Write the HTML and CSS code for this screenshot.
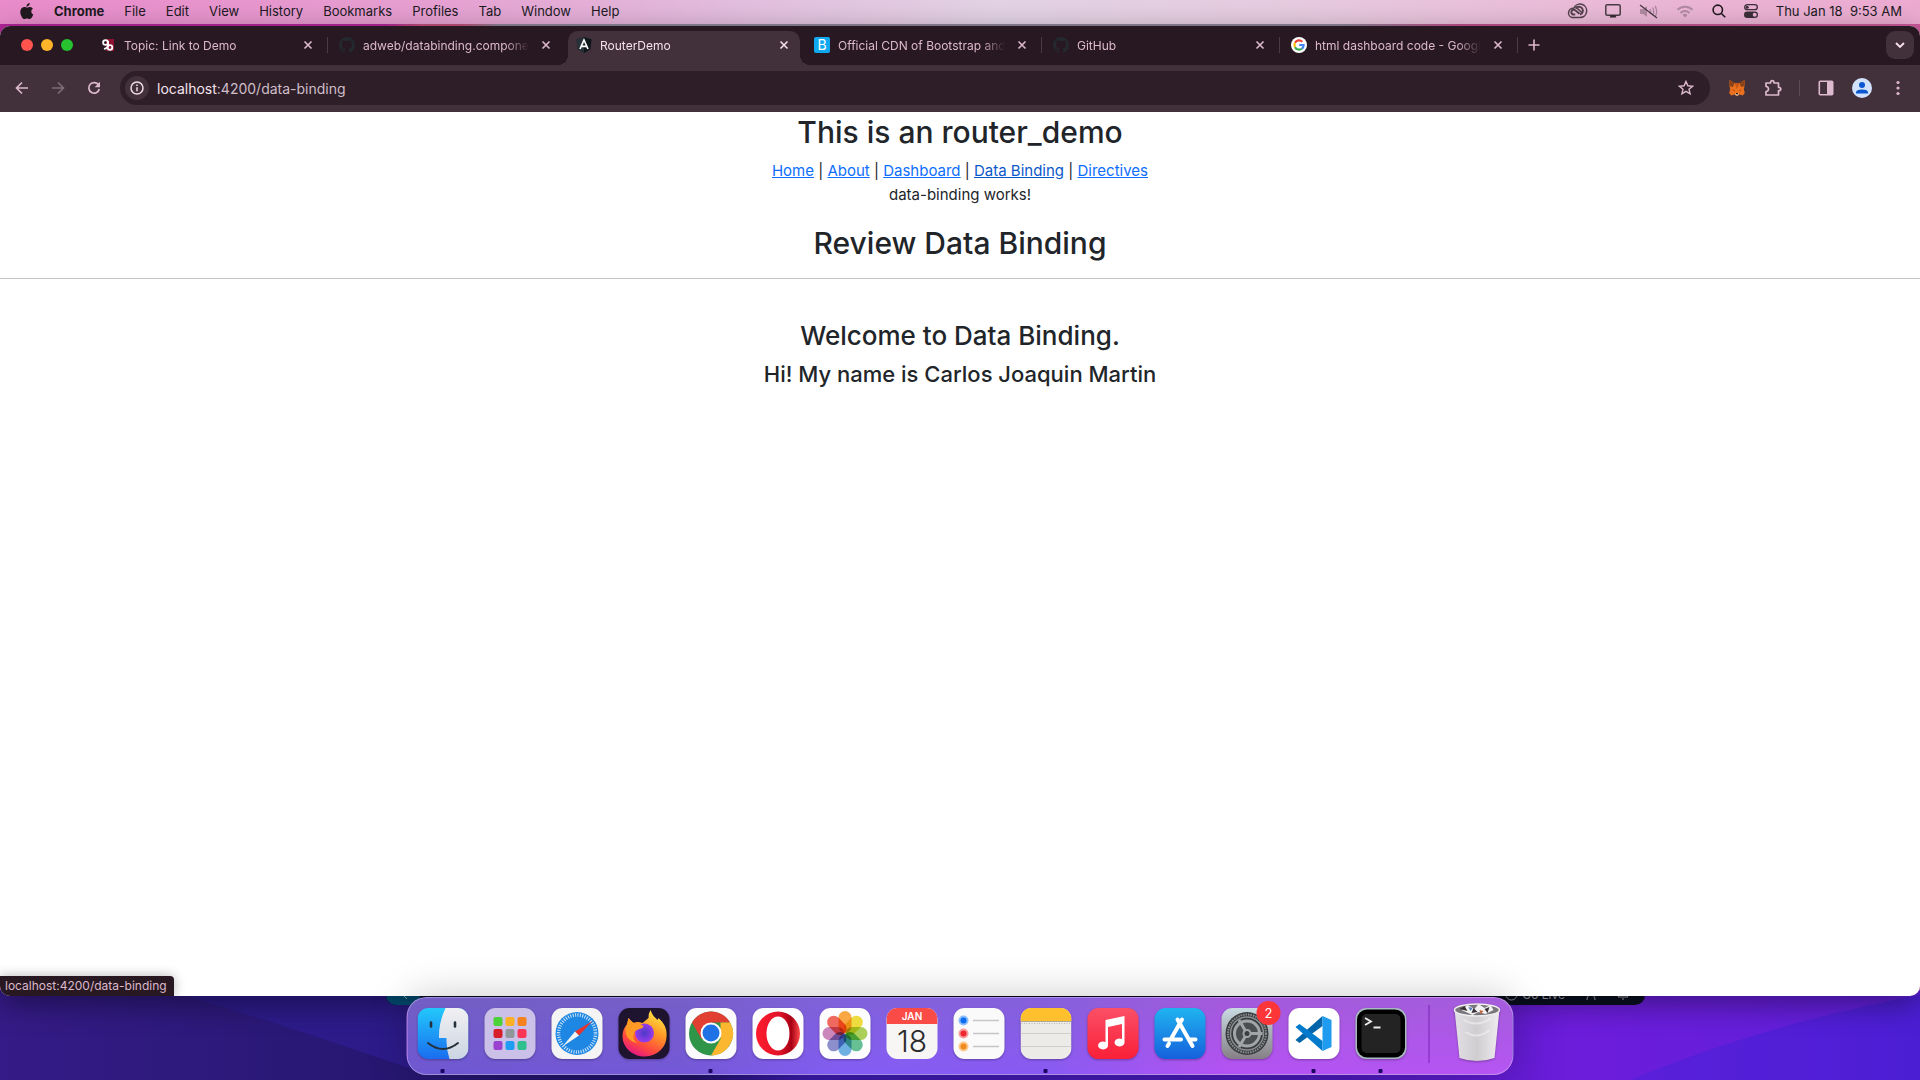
FILE: index.html
```html
<!DOCTYPE html>
<html lang="en">
<head>
<meta charset="utf-8">
<title>RouterDemo</title>
<link rel="stylesheet" href="styles.css">
</head>
<body>
<svg class="defs" width="0" height="0" aria-hidden="true">
  <defs>
    <symbol id="close" viewBox="0 0 10 10"><path d="M1.5 1.5l7 7M8.500 1.500l-7 7" fill="none" stroke="currentColor" stroke-width="1.600"/></symbol>
    <symbol id="github" viewBox="0 0 16 16"><path fill="#24292f" d="M8 0C3.580 0 0 3.580 0 8c0 3.540 2.290 6.530 5.470 7.590.4.070.55-.17.55-.38 0-.19-.01-.82-.01-1.490-2.010.37-2.530-.49-2.690-.94-.09-.23-.48-.94-.82-1.130-.28-.15-.68-.52-.01-.53.63-.01 1.080.58 1.230.82.72 1.210 1.870.87 2.330.66.07-.52.28-.87.51-1.070-1.780-.2-3.640-.89-3.640-3.950 0-.87.31-1.590.82-2.150-.08-.2-.36-1.020.08-2.120 0 0 .67-.21 2.200.82a7.700 7.700 0 0 1 4 0c1.530-1.040 2.200-.82 2.200-.82.44 1.100.16 1.920.08 2.120.51.56.82 1.270.82 2.150 0 3.070-1.870 3.750-3.650 3.950.29.25.54.73.54 1.480 0 1.070-.01 1.930-.01 2.200 0 .21.15.46.55.38A8 8 0 0 0 16 8c0-4.420-3.580-8-8-8z"/></symbol>
  </defs>
</svg>
<div class="desktop">
  <svg class="wallpaper" viewBox="0 0 1920 90" preserveAspectRatio="none" aria-hidden="true">
    <defs>
      <linearGradient id="wp" x2="1"><stop offset="0" stop-color="#341b87"/><stop offset=".18" stop-color="#281873"/><stop offset=".36" stop-color="#1f1066"/><stop offset=".42" stop-color="#3a1aa8"/><stop offset=".7" stop-color="#4a18b8"/><stop offset=".82" stop-color="#6c1ddb"/><stop offset="1" stop-color="#5f1fda"/></linearGradient>
      <linearGradient id="wr" x2="1"><stop offset="0" stop-color="#5a1fda"/><stop offset="1" stop-color="#4b1ed4"/></linearGradient>
    </defs>
    <path fill="url(#wp)" d="M0 0h1920v90H0z"/>
    <path fill="#2c1b89" d="M180 4Q300 40 420 82L820 82V0H180z"/>
    <path fill="url(#wr)" d="M1630 90Q1760 35 1920 5V90z"/>
  </svg>

  <header class="menubar">
    <nav class="menus" aria-label="Application menu">
      <button class="menu apple" aria-label="Apple"><svg width="14" height="17" viewBox="0 0 14 17"><path fill="#201a1e" d="M9.700 0c.1 1-.3 1.900-.9 2.600-.6.700-1.500 1.200-2.300 1.100-.1-.9.300-1.900.9-2.500C8 .5 9 .1 9.700 0zM12.900 5.800c-1 .6-1.600 1.500-1.600 2.700 0 1.400.8 2.500 2 3-.3.900-.7 1.700-1.200 2.500-.7 1-1.400 2-2.500 2-1 0-1.400-.6-2.600-.6-1.200 0-1.600.6-2.600.6-1.100 0-1.900-1.100-2.600-2.100C.4 11.800-.4 8.300 1 6c.8-1.300 2-2.100 3.300-2.100 1.200 0 2 .7 2.900.7.900 0 1.700-.7 3-.7 1 .1 2 .5 2.700 1.900z"/></svg></button>
      <button class="menu app">Chrome</button>
      <button class="menu">File</button>
      <button class="menu">Edit</button>
      <button class="menu">View</button>
      <button class="menu">History</button>
      <button class="menu">Bookmarks</button>
      <button class="menu">Profiles</button>
      <button class="menu">Tab</button>
      <button class="menu">Window</button>
      <button class="menu">Help</button>
    </nav>
    <div class="status">
      <svg width="20" height="16" viewBox="0 0 20 16" fill="none" stroke="#54424d"><path stroke-width="1.500" d="M5 14.500h8a6.700 6.700 0 1 0-6.200-9.200A4.700 4.700 0 0 0 5 14.500z"/><path stroke-width="2" d="M12.500 10.800L8.200 7.200a2.400 2.400 0 1 0-1.700 4.300h1.700M8.500 5.500a4 4 0 1 1 4.500 6"/><path stroke-width="1.500" d="M9.500 4.600l5 4.600"/></svg>
      <svg width="16" height="14" viewBox="0 0 16 14"><rect x=".8" y=".8" width="14.400" height="10.400" rx="1.500" fill="none" stroke="#4a3c45" stroke-width="1.500"/><path fill="#33282f" d="M6 11h4l1.500 2.500h-7z"/></svg>
      <svg width="19" height="15" viewBox="0 0 19 15"><path fill="#b08aa2" d="M1 5h3l4-3v11l-4-3H1z"/><path fill="none" stroke="#b08aa2" stroke-width="1.400" d="M11 5q1.500 2.500 0 5M13.500 3.500q2.500 4 0 8M16 2q3.500 5.500 0 11"/><path stroke="#4a3a45" stroke-width="1.300" d="M1 1l17 13"/></svg>
      <svg width="18" height="13" viewBox="0 0 18 13" fill="none" stroke="#b08aa2" stroke-width="2"><path d="M1.500 4.800a10.500 10.500 0 0 1 15 0M4.500 8a6.300 6.300 0 0 1 9 0"/><path fill="#b08aa2" stroke="none" d="M6.600 10a3.400 3.400 0 0 1 4.800 0L9 12.600z"/></svg>
      <svg width="14" height="14" viewBox="0 0 14 14" fill="none" stroke="#201a1e" stroke-width="1.600"><circle cx="5.800" cy="5.800" r="4.700"/><path d="M9.200 9.200l4 4"/></svg>
      <svg width="14" height="14" viewBox="0 0 14 14"><rect x=".7" y=".7" width="12.600" height="4.900" rx="2.450" fill="none" stroke="#3d2f39" stroke-width="1.300"/><circle cx="3.200" cy="3.200" r="1.500" fill="#3d2f39"/><rect y="7.500" width="14" height="6.500" rx="3.200" fill="#3d2f39"/><circle cx="10.700" cy="10.700" r="2" fill="#eab3d2"/></svg>
      <time class="clock">Thu Jan 18&nbsp; 9:53 AM</time>
    </div>
  </header>

  <div class="editor" aria-hidden="true">
    <span class="remote"><svg width="12" height="12" viewBox="0 0 12 12" fill="none" stroke="#9fc4d6"><path d="M2 2l3 3-3 3M10 3L6 7l4 4"/></svg></span>
    <span class="golive"><svg width="13" height="13" viewBox="0 0 13 13" fill="none" stroke="#a9a9b2"><circle cx="6.500" cy="6.500" r="5.500"/><path d="M5 6l1.500 2L8 6"/></svg>Go Live</span>
    <svg width="12" height="12" viewBox="0 0 12 12" fill="none" stroke="#a9a9b2"><circle cx="6" cy="4" r="2.500"/><path d="M2 12q0-5 4-5t4 5"/></svg>
    <svg width="12" height="12" viewBox="0 0 12 12" fill="none" stroke="#a9a9b2"><path d="M1 9h10L9.500 7V4a3.500 3.500 0 0 0-7 0v3zM5 11h2"/></svg>
  </div>

  <section class="browser">
    <div class="tabstrip">
      <div class="lights">
        <button class="light red" aria-label="Close window"></button>
        <button class="light yellow" aria-label="Minimize"></button>
        <button class="light green" aria-label="Zoom"></button>
      </div>
      <div class="tab">
        <svg width="16" height="16" viewBox="0 0 16 16"><rect x="6" y="2" width="8" height="12" fill="#8c1230"/><g fill="none" stroke="#fff" stroke-width="1.800"><circle cx="5.500" cy="5.500" r="2.400"/><path d="M8 4v4q0 3-4 4"/><circle cx="10" cy="10.500" r="2.300"/></g></svg>
        <span class="title">Topic: Link to Demo</span>
        <button class="close" aria-label="Close tab"><svg width="10" height="10"><use href="#close"/></svg></button>
      </div>
      <div class="tab line">
        <svg width="16" height="16"><use href="#github"/></svg>
        <span class="title">adweb/databinding.componen</span>
        <button class="close" aria-label="Close tab"><svg width="10" height="10"><use href="#close"/></svg></button>
      </div>
      <div class="tab active">
        <svg width="16" height="16" viewBox="0 0 16 16"><path fill="#1b2a30" d="M8 0l7.500 2.600-1.200 9.600L8 16z"/><path fill="#0f171b" d="M8 0L.5 2.600l1.200 9.600L8 16l6.300-3.800L15.500 2.600z"/><path fill="#263238" d="M8 0v16l-6.300-3.800L.5 2.600z"/><path fill="none" stroke="#fff" stroke-width="1.700" d="M4 12L8 3l4 9M5.500 9.300h5"/></svg>
        <span class="title">RouterDemo</span>
        <button class="close" aria-label="Close tab"><svg width="10" height="10"><use href="#close"/></svg></button>
      </div>
      <div class="tab">
        <span class="bootstrap">B</span>
        <span class="title">Official CDN of Bootstrap and</span>
        <button class="close" aria-label="Close tab"><svg width="10" height="10"><use href="#close"/></svg></button>
      </div>
      <div class="tab line">
        <svg width="16" height="16"><use href="#github"/></svg>
        <span class="title">GitHub</span>
        <button class="close" aria-label="Close tab"><svg width="10" height="10"><use href="#close"/></svg></button>
      </div>
      <div class="tab line">
        <svg width="16" height="16" viewBox="0 0 16 16"><circle cx="8" cy="8" r="8" fill="#fff"/><g fill="none" stroke-width="2.200"><path stroke="#ea4335" d="M4 5.800A4.600 4.600 0 0 1 11.300 4.700"/><path stroke="#fbbc05" d="M4 10.200a4.600 4.600 0 0 1 0-4.400"/><path stroke="#34a853" d="M11 11.500A4.600 4.600 0 0 1 4 10.200"/><path stroke="#4285f4" d="M8.200 8h4.400q0 2.300-1.600 3.500"/></g></svg>
        <span class="title">html dashboard code - Googl</span>
        <button class="close" aria-label="Close tab"><svg width="10" height="10"><use href="#close"/></svg></button>
      </div>
      <button class="newtab" aria-label="New tab"><svg width="12" height="12" viewBox="0 0 12 12"><path d="M6 .5v11M.5 6h11" stroke="currentColor" stroke-width="1.600"/></svg></button>
      <button class="tabsearch" aria-label="Search tabs"><svg width="10" height="7" viewBox="0 0 10 7"><path d="M1 1l4 4 4-4" fill="none" stroke="currentColor" stroke-width="1.900"/></svg></button>
    </div>

    <div class="toolbar">
      <button class="tool" aria-label="Back"><svg width="14" height="14" viewBox="0 0 14 14"><path d="M13 7H2M7 1.500L1.500 7 7 12.500" fill="none" stroke="currentColor" stroke-width="1.700"/></svg></button>
      <button class="tool off" aria-label="Forward"><svg width="14" height="14" viewBox="0 0 14 14"><path d="M1 7h11M7 1.500L12.500 7 7 12.500" fill="none" stroke="currentColor" stroke-width="1.700"/></svg></button>
      <button class="tool" aria-label="Reload"><svg width="14" height="14" viewBox="0 0 14 14"><path d="M11.600 4A5.300 5.300 0 1 0 12.300 8" fill="none" stroke="currentColor" stroke-width="1.700"/><path fill="currentColor" d="M13 .8v5.400H7.600z"/></svg></button>
      <div class="omnibox">
        <button class="info" aria-label="Site information"><svg width="14" height="14" viewBox="0 0 14 14"><circle cx="7" cy="7" r="6" fill="none" stroke="currentColor" stroke-width="1.500"/><path d="M7 6.200v4M7 3.500V5" stroke="currentColor" stroke-width="1.500"/></svg></button>
        <div class="url" role="textbox" aria-label="Address"><b>localhost</b>:4200/data-binding</div>
        <button class="star" aria-label="Bookmark"><svg width="16" height="16" viewBox="0 0 16 16"><path d="M8 1.500l1.900 4.300 4.700.4-3.600 3.100 1.100 4.600L8 11.400l-4.100 2.500L5 9.300 1.400 6.200l4.700-.4z" fill="none" stroke="currentColor" stroke-width="1.400"/></svg></button>
      </div>
      <div class="actions">
        <button class="tool" aria-label="MetaMask"><svg width="16" height="16" viewBox="0 0 16 16"><path fill="#e8701f" d="M.5 0l5 3h5l5-3 .3 5-1 4 1 4-2 2.500-3.500-1L9 15.800H7L5.700 14.500l-3.500 1-2-2.500 1-4-1-4z"/><path fill="#8a4318" d="M.5 0l5 3L4 7 .2 6zM15.500 0l-5 3L12 7l3.800-1z"/><path fill="#c95614" d="M5.500 3L8 9l2.500-6zM3 9l3 1-1 2zM13 9l-3 1 1 2z"/><path fill="#d9c3b3" d="M6 13.500h4l-1 2H7z"/><path fill="#222" d="M7 13h2v1.300H7z"/></svg></button>
        <button class="tool" aria-label="Extensions"><svg width="18" height="18" viewBox="0 0 18 18"><path d="M2 4h4.500q0-2.300 1.800-2.300T10 4h4.500v4.300q2.300 0 2.300 1.700t-2.300 1.700V16H2v-3.500q2.500-.3 2.500-2.500T2 7.500z" fill="none" stroke="currentColor" stroke-width="1.700" stroke-linejoin="round"/></svg></button>
        <span class="rule"></span>
        <button class="tool" aria-label="Side panel"><svg width="16" height="16" viewBox="0 0 16 16"><rect x="1.300" y="1.300" width="13.400" height="13.400" rx="1" fill="none" stroke="currentColor" stroke-width="1.600"/><path fill="currentColor" d="M9 1h6v14H9z"/></svg></button>
        <button class="tool" aria-label="Profile"><svg width="20" height="20" viewBox="0 0 20 20"><circle cx="10" cy="10" r="10" fill="#d3e3fd"/><circle cx="10" cy="7" r="3" fill="#0b57d0"/><path fill="#0b57d0" d="M4 15.500v-1q0-3 6-3t6 3v1z"/></svg></button>
        <button class="tool" aria-label="Menu"><svg width="4" height="16" viewBox="0 0 4 16" fill="currentColor"><circle cx="2" cy="2.500" r="1.600"/><circle cx="2" cy="8" r="1.600"/><circle cx="2" cy="13.500" r="1.600"/></svg></button>
      </div>
    </div>

    <main class="page">
      <h2>This is an router_demo</h2>
      <nav><a href="#home">Home</a> | <a href="#about">About</a> | <a href="#dashboard">Dashboard</a> | <a class="hover" href="#data-binding">Data Binding</a> | <a href="#directives">Directives</a></nav>
      <p>data-binding works!</p>
      <h2>Review Data Binding</h2>
      <hr>
      <br>
      <h3>Welcome to Data Binding.</h3>
      <h4>Hi! My name is Carlos Joaquin Martin</h4>
    </main>
    <div class="hint">localhost:4200/data-binding</div>
  </section>

  <nav class="dock" aria-label="Dock">
    <button class="icon running" aria-label="Finder"><svg viewBox="0 0 51 51"><defs><linearGradient id="f1" y2="1" x2="0"><stop stop-color="#22c8fb"/><stop offset="1" stop-color="#1a6df0"/></linearGradient><linearGradient id="f2" y2="1" x2="0"><stop stop-color="#f1f0f3"/><stop offset="1" stop-color="#cbd5e2"/></linearGradient><clipPath id="sq"><rect width="51" height="51" rx="11"/></clipPath></defs><g clip-path="url(#sq)"><path fill="url(#f1)" d="M0 0h51v51H0z"/><path fill="url(#f2)" d="M28 0Q21 15 21.500 30H29q-.5 10 3 21h19V0z"/></g><path d="M13.500 14.500v4M37.500 14.500v4" stroke="#24303a" stroke-width="2.600" stroke-linecap="round"/><path d="M10.500 35q15 12 30 0" fill="none" stroke="#24303a" stroke-width="2" stroke-linecap="round"/></svg></button>
    <button class="icon" aria-label="Launchpad"><svg viewBox="0 0 51 51"><rect width="51" height="51" rx="11" fill="#cbc1e8"/><rect x="9" y="9" width="9" height="9" rx="2" fill="#4cd137"/><rect x="21" y="9" width="9" height="9" rx="2" fill="#fbb026"/><rect x="33" y="9" width="9" height="9" rx="2" fill="#f5821f"/><rect x="9" y="21" width="9" height="9" rx="2" fill="#d71f2b"/><rect x="21" y="21" width="9" height="9" rx="2" fill="#8f979b"/><rect x="33" y="21" width="9" height="9" rx="2" fill="#fc3554"/><rect x="9" y="33" width="9" height="9" rx="2" fill="#9a41cf"/><rect x="21" y="33" width="9" height="9" rx="2" fill="#1f9df5"/><rect x="33" y="33" width="9" height="9" rx="2" fill="#2fc08e"/></svg></button>
    <button class="icon" aria-label="Safari"><svg viewBox="0 0 51 51"><rect width="51" height="51" rx="11" fill="#f4f4f5"/><circle cx="25.500" cy="25.500" r="21.500" fill="#1e86e3"/><circle cx="25.500" cy="25.500" r="18.500" fill="none" stroke="#cfe6fa" stroke-width="3.500" stroke-dasharray="1 1.420"/><path fill="#e8342c" d="M41 13L23.500 23.500l4 4z"/><path fill="#f3f3f3" d="M11 38.500l12.500-15 4 4z"/></svg></button>
    <button class="icon" aria-label="Firefox"><svg viewBox="0 0 51 51"><defs><linearGradient id="ff" x1=".8" x2=".3" y2="1"><stop stop-color="#fff04a"/><stop offset=".4" stop-color="#ff9a25"/><stop offset=".75" stop-color="#ff4a3d"/><stop offset="1" stop-color="#e31587"/></linearGradient><radialGradient id="fp"><stop stop-color="#4a3ac8"/><stop offset="1" stop-color="#9b3bea"/></radialGradient></defs><rect width="51" height="51" rx="11" fill="#1f1430"/><path fill="url(#ff)" d="M32 2q2 6 7 10l1-2q9 8 8 18a22 20 0 0 1-44 1q0-9 5-13l1-6q2 3 5 5 4-2 9 0l6-5q0-5 2-8z"/><circle cx="26" cy="25" r="9.500" fill="url(#fp)"/><path fill="#ff9a25" d="M10 10q4 5 8 6 3-1 7 2l-1 2q-7 2-8 4-3 8 3 11-12-2-12-14z"/></svg></button>
    <button class="icon running" aria-label="Chrome"><svg viewBox="0 0 51 51"><rect width="51" height="51" rx="11" fill="#fbfafc"/><circle cx="25.500" cy="25.500" r="22" fill="#2f9549"/><path fill="#e23f33" d="M6.500 14.500A22 22 0 0 1 44.600 14.500H25.500L16 31z"/><path fill="#fbb72f" d="M44.600 14.500A22 22 0 0 1 25.500 47.500L35 31V14.500z"/><circle cx="25.500" cy="25" r="10.500" fill="#fff"/><circle cx="25.500" cy="25" r="8.500" fill="#1f71e6"/></svg></button>
    <button class="icon" aria-label="Opera"><svg viewBox="0 0 51 51"><defs><linearGradient id="op" x2="1" y2="0"><stop stop-color="#ff1b2d"/><stop offset=".55" stop-color="#e0142a"/><stop offset=".8" stop-color="#a70014"/><stop offset="1" stop-color="#ff4b4b"/></linearGradient></defs><rect width="51" height="51" rx="11" fill="#fdfcfe"/><ellipse cx="25.500" cy="25.500" rx="22" ry="22" fill="url(#op)"/><ellipse cx="25.500" cy="25.500" rx="11.500" ry="17" fill="#fff"/></svg></button>
    <button class="icon" aria-label="Photos"><svg viewBox="0 0 51 51"><rect width="51" height="51" rx="11" fill="#fdfcfe"/><g class="petals"><rect x="19" y="3" width="13" height="22" rx="6.500" fill="#fb9a20"/><rect x="19" y="3" width="13" height="22" rx="6.500" fill="#ecd81d" transform="rotate(45 25.500 25.500)"/><rect x="19" y="3" width="13" height="22" rx="6.500" fill="#9fcb3b" transform="rotate(90 25.500 25.500)"/><rect x="19" y="3" width="13" height="22" rx="6.500" fill="#4db782" transform="rotate(135 25.500 25.500)"/><rect x="19" y="3" width="13" height="22" rx="6.500" fill="#57a5e0" transform="rotate(180 25.500 25.500)"/><rect x="19" y="3" width="13" height="22" rx="6.500" fill="#7a7cc4" transform="rotate(225 25.500 25.500)"/><rect x="19" y="3" width="13" height="22" rx="6.500" fill="#c473b0" transform="rotate(270 25.500 25.500)"/><rect x="19" y="3" width="13" height="22" rx="6.500" fill="#ef5043" transform="rotate(315 25.500 25.500)"/></g></svg></button>
    <button class="icon calendar" aria-label="Calendar"><span class="month">JAN</span><span class="day">18</span></button>
    <button class="icon" aria-label="Reminders"><svg viewBox="0 0 51 51"><rect width="51" height="51" rx="11" fill="#fafafa"/><path d="M19.500 12.500h26M19.500 25.500h26M19.500 38.500h26" stroke="#c6c6c8" stroke-width="1.400"/><circle cx="10" cy="12.500" r="5" fill="#8bbcfb"/><circle cx="10" cy="25.500" r="5" fill="#f99b9b"/><circle cx="10" cy="38.500" r="5" fill="#fbc88b"/><circle cx="10" cy="12.500" r="3" fill="#0a6cf0"/><circle cx="10" cy="25.500" r="3" fill="#f0262e"/><circle cx="10" cy="38.500" r="3" fill="#f18a1d"/></svg></button>
    <button class="icon running" aria-label="Notes"><svg viewBox="0 0 51 51"><g clip-path="url(#sq)"><path fill="#edebe8" d="M0 0h51v51H0z"/><path fill="#fec02d" d="M0 0h51v13H0z"/><path d="M0 13.500h51" stroke="#b0a893"/><path d="M1 15.500h50" stroke="#bbb" stroke-dasharray="1 1.500"/><path d="M0 25.500h51M0 38.500h51" stroke="#d0cdca"/></g></svg></button>
    <button class="icon" aria-label="Music"><svg viewBox="0 0 51 51"><defs><linearGradient id="mu" x2="0" y2="1"><stop stop-color="#fb5066"/><stop offset="1" stop-color="#fa1f38"/></linearGradient></defs><rect width="51" height="51" rx="11" fill="url(#mu)"/><path fill="#fff" d="M18 12l19-4v27a5 4 0 1 1-2.500-4V16L20.500 19v19a5 4 0 1 1-2.500-4z"/></svg></button>
    <button class="icon" aria-label="App Store"><svg viewBox="0 0 51 51"><defs><linearGradient id="as" x2="0" y2="1"><stop stop-color="#1fb4f0"/><stop offset="1" stop-color="#1660dc"/></linearGradient></defs><rect width="51" height="51" rx="11" fill="url(#as)"/><g stroke="#fff" stroke-width="4" stroke-linecap="round"><path d="M27.500 11.500L17 30M14.500 35.500l-1.500 2.500M23 11.500l15 26.500M10 31.500h16.500M36 31.500h5"/></g></svg></button>
    <button class="icon" aria-label="System Preferences, 2 notifications"><svg viewBox="0 0 51 51"><defs><linearGradient id="sp" x2="0" y2="1"><stop stop-color="#c9dbe2"/><stop offset="1" stop-color="#858085"/></linearGradient></defs><rect width="51" height="51" rx="11" fill="url(#sp)"/><circle cx="25.500" cy="25.500" r="21.500" fill="#3a3d3f"/><circle cx="25.500" cy="25.500" r="19" fill="none" stroke="#8b8e90" stroke-width="2" stroke-dasharray="1.500 1"/><circle cx="25.500" cy="25.500" r="16.500" fill="none" stroke="#8b8e90" stroke-width="1.500"/><circle cx="25.500" cy="25.500" r="12.500" fill="#4b4e50" stroke="#a2a5a7" stroke-width="3"/><path d="M25.500 25.500H41M25.500 25.500L17.500 12M25.500 25.500L17.500 39" stroke="#a2a5a7" stroke-width="3"/><circle cx="25.500" cy="25.500" r="3.500" fill="#3a3d3f" stroke="#a2a5a7" stroke-width="2"/></svg><span class="badge">2</span></button>
    <button class="icon running" aria-label="Visual Studio Code"><svg viewBox="0 0 51 51"><rect width="51" height="51" rx="11" fill="#fff"/><path fill="#0065a9" d="M34 8L7 32l4 3 23-17z"/><path fill="#007acc" d="M34 43L7 19l4-3 23 17z"/><path fill="#1f9cf0" d="M34 8l9 4v27l-9 4z"/></svg></button>
    <button class="icon running" aria-label="Terminal"><svg viewBox="0 0 51 51"><rect width="51" height="51" rx="11" fill="#a9bcc0"/><rect x="1.500" y="1.500" width="48" height="48" rx="10" fill="#000"/><rect x="6" y="6" width="39" height="39" rx="5" fill="#232323"/><path d="M9.500 10l6 3.500-6 3.500M18 19.500h7" fill="none" stroke="#eee" stroke-width="1.800"/></svg></button>
    <span class="divider"></span>
    <button class="icon" aria-label="Trash"><svg viewBox="0 0 51 51"><defs><linearGradient id="tr" x2="1" y2="0"><stop stop-color="#e2e0e4"/><stop offset=".5" stop-color="#cfcdd0"/><stop offset="1" stop-color="#efedf0"/></linearGradient></defs><path fill="url(#tr)" d="M3 1h45l-5 49q-17.500 6-35 0z"/><ellipse cx="25.500" cy="2" rx="22.500" ry="6" fill="#7a777c" stroke="#eee" stroke-width="1.500"/><path fill="#f2f2f2" d="M10 2l6-5 7 4 4-5 6 4 6-3 3 5-8 4-7-2-6 3z"/><path fill="#3a3236" d="M8 1l5-3 3 5zM22 0l4 4-6 1zM33 1l5-2-2 6z"/><path fill="#4a78b8" d="M17-1l4 1-2 3z"/><path fill="#c9653a" d="M28 2l4 1-3 3z"/><path d="M12 12q14 8 28-2M14 24q12 8 24-2" stroke="#f3f1f4" stroke-opacity=".6" stroke-width="2" fill="none"/></svg></button>
  </nav>
</div>
</body>
</html>
```
FILE: styles.css
```css
* { box-sizing: border-box; }

body {
  margin: 0;
  font-family: Inter, "Liberation Sans", sans-serif;
  color: #212529;
}

button {
  border: 0;
  padding: 0;
  background: none;
  font: inherit;
  color: inherit;
  display: flex;
  align-items: center;
  justify-content: center;
}

svg { display: block; flex: none; overflow: visible; }
.defs { position: absolute; }

.desktop {
  position: relative;
  min-height: 100vh;
  display: flex;
  flex-direction: column;
  overflow: hidden;
  isolation: isolate;
  background: linear-gradient(90deg, #b3259a 0 20%, #c0507a 22% 24%, #8d8399 26% 70%, #c04f8c 76%, #cc5a9a);
}

.wallpaper {
  position: absolute;
  bottom: 0;
  width: 100%;
  height: 90px;
  z-index: -2;
}

/* menu bar */
.menubar {
  height: 24px;
  padding: 0 18px 2px 20px;
  display: flex;
  align-items: center;
  justify-content: space-between;
  background: linear-gradient(90deg, #e98bca, #e69fd1 22%, #e2bddd 38%, #e2d2e4 52%, #e6cce0 66%, #eabbd8 82%, #ecaad0);
  color: #201a1e;
  font-size: 13px;
}
.menus, .status { display: flex; align-items: center; }
.menus { gap: 20px; }
.app { font-weight: 700; }
.status { gap: 18px; }

/* editor window behind the browser */
.editor {
  position: absolute;
  left: 386px;
  right: 275px;
  bottom: 75px;
  height: 22px;
  z-index: -1;
  display: flex;
  align-items: center;
  justify-content: flex-end;
  gap: 20px;
  padding-right: 16px;
  border-radius: 0 0 10px 10px;
  background: #0a1020;
  color: #a9a9b2;
  font-size: 12px;
  overflow: hidden;
}
.remote { margin-right: auto; width: 34px; height: 22px; padding: 5px 11px; background: #00567f; }
.golive { display: flex; align-items: center; gap: 4px; }

/* browser window */
.browser {
  position: relative;
  flex: 1;
  margin: 2px 0 84px;
  display: flex;
  flex-direction: column;
  border-radius: 10px;
  overflow: hidden;
  background: #fff;
  box-shadow: 0 8px 30px rgba(0, 0, 0, .4);
}
.tabstrip {
  height: 39px;
  display: flex;
  padding-right: 6px;
  background: #281821;
  color: #dcb9cc;
  font-size: 12px;
}
.lights { width: 89px; padding: 0 0 1px 21px; display: flex; align-items: center; gap: 8px; }
.light { width: 12px; height: 12px; border-radius: 6px; }
.red { background: #ff544d; }
.yellow { background: #ffb429; }
.green { background: #28c231; }

.tab {
  position: relative;
  flex: 0 1 238px;
  min-width: 0;
  display: flex;
  align-items: center;
  gap: 8px;
  padding: 0 14px 1px 11px;
}
.tab.line { border-left: 1px solid transparent; border-image: linear-gradient(transparent 11px, #4c3a44 11px 27px, transparent 27px) 1; }
.title {
  flex: 1;
  min-width: 0;
  overflow: hidden;
  white-space: nowrap;
  mask-image: linear-gradient(90deg, #000 calc(100% - 24px), transparent);
}
.close { width: 14px; height: 16px; justify-content: flex-end; }
.active {
  height: 34px;
  margin: 5px 3px 0;
  flex-basis: 232px;
  padding: 0 11px 6px 8px;
  border-radius: 10px 10px 0 0;
  background: #42303a;
  color: #f5dfea;
}
.active::before, .active::after {
  content: "";
  position: absolute;
  bottom: 0;
  width: 10px;
  height: 10px;
}
.active::before { left: -10px; background: radial-gradient(circle at 0 0, transparent 10px, #42303a 10px); }
.active::after { right: -10px; background: radial-gradient(circle at 100% 0, transparent 10px, #42303a 10px); }
.bootstrap {
  width: 16px;
  height: 16px;
  border-radius: 2px;
  background: #10a9f0;
  color: #fff;
  font-size: 14px;
  line-height: 16px;
  text-align: center;
}
.newtab { padding: 0 10px 1px; border-left: 1px solid transparent; border-image: linear-gradient(transparent 11px, #4c3a44 11px 27px, transparent 27px) 1; }
.tabsearch {
  width: 28px;
  height: 28px;
  margin: 5px 0 0 auto;
  border-radius: 9px;
  background: #42303a;
  color: #f5dfea;
}

.toolbar {
  height: 47px;
  display: flex;
  align-items: center;
  padding: 0 4px 1px;
  background: #42303a;
  color: #dcb9cc;
}
.tool { width: 36px; height: 34px; }
.off { color: #7f6b76; }
.omnibox {
  flex: 1;
  height: 34px;
  margin: 0 9px 0 8px;
  display: flex;
  align-items: center;
  gap: 8px;
  padding: 0 16px 0 5px;
  border-radius: 17px;
  background: #2e1e28;
}
.info { width: 24px; height: 24px; border-radius: 12px; background: #42303a; color: #f0dde7; }
.url { flex: 1; font-size: 14px; color: #d0bec8; }
.url b { font-weight: 400; color: #f5e4ed; }
.actions { display: flex; align-items: center; }
.rule { width: 1px; height: 16px; margin: 0 8px; background: #5e4b55; }

/* web page */
.page { flex: 1; text-align: center; font-size: 15px; line-height: 24px; }
.page h2, .page h3, .page h4 { margin: 0 0 7px; font-weight: 500; }
.page h2 { font-size: 30px; line-height: 40px; }
.page h3 { font-size: 26px; line-height: 34px; }
.page h4 { font-size: 22px; line-height: 29px; }
.page p { margin: 0 0 16px; }
.page a { color: #0d6efd; }
.page a.hover { color: #0a58ca; }
.page hr { margin: 15px 0 16px; border: 0; border-top: 1px solid #c4c5c6; }
.hint {
  position: absolute;
  left: 0;
  bottom: 0;
  height: 20px;
  padding: 0 7px 0 5px;
  border-radius: 0 4px 0 8px;
  background: #281821;
  color: #dcb9cc;
  font-size: 12px;
  line-height: 20px;
  box-shadow: 0 0 12px rgba(0, 0, 0, .3);
}

/* dock */
.dock {
  position: absolute;
  left: 50%;
  bottom: 5px;
  transform: translateX(-50%);
  height: 78px;
  padding: 0 10px 5px;
  display: flex;
  align-items: center;
  gap: 16px;
  border: 1px solid rgba(255, 255, 255, .3);
  border-radius: 20px;
  background: linear-gradient(rgba(120, 110, 160, .3), transparent), linear-gradient(90deg, #6f57d2, #7458d8 25%, #845cf4 40%, #8a5af4 58%, #b452f4 74%, #b655f4);
  box-shadow: 0 0 40px rgba(0, 0, 0, .22);
}
.icon { position: relative; width: 51px; height: 51px; border-radius: 11px; }
.icon svg { width: 51px; height: 51px; filter: drop-shadow(0 1px 1px rgba(0, 0, 0, .3)); }
.running::after {
  content: "";
  position: absolute;
  left: 23px;
  bottom: -14px;
  width: 4px;
  height: 4px;
  border-radius: 1px;
  background: #1a0560;
}
.petals rect { mix-blend-mode: multiply; opacity: .85; }
.calendar { flex-direction: column; justify-content: flex-start; overflow: hidden; background: #f7f6f5; color: #2b2b2b; }
.month { width: 100%; height: 16px; background: #fa4b46; color: #fff; font-size: 10px; line-height: 17px; font-weight: 600; }
.day { font-size: 30px; line-height: 34px; font-weight: 300; }
.badge {
  position: absolute;
  right: -8px;
  top: -7px;
  width: 24px;
  height: 24px;
  border-radius: 12px;
  background: #fc3539;
  color: #fff;
  font-size: 13px;
  line-height: 24px;
}
.divider { width: 1px; height: 58px; margin: 0 6px; background: #7a22b8; }
```
